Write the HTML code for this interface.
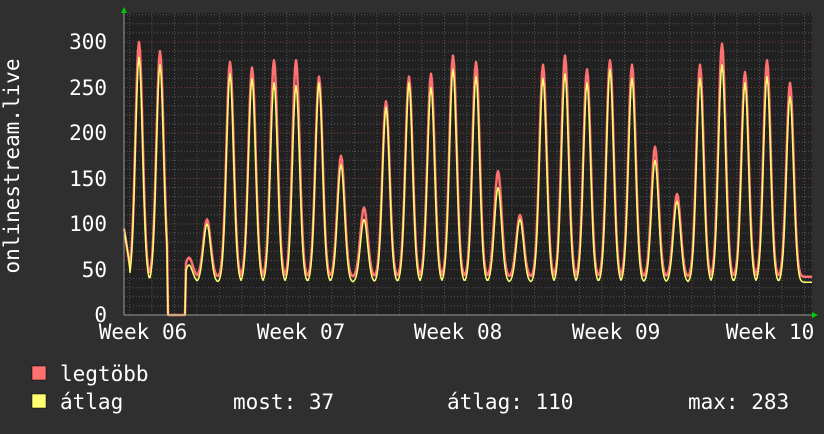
<!DOCTYPE html><html><head><meta charset="utf-8"><style>
body{margin:0;background:#2f2f2f;width:824px;height:430px;overflow:hidden;font-family:"DejaVu Sans Mono","Liberation Mono",monospace;color:#fff}
svg text{font-family:"DejaVu Sans Mono","Liberation Mono",monospace;fill:#fff;font-size:21px}
</style></head><body>
<svg id="g" width="824" height="430" xmlns="http://www.w3.org/2000/svg">
<rect x="124" y="13" width="688" height="302" fill="#212121"/>
<g id="grid"></g>
<polyline id="r" fill="none" stroke="#ff7070" stroke-width="2.5" stroke-linejoin="round"/>
<polyline id="y" fill="none" stroke="#ffff70" stroke-width="1.5" stroke-linejoin="round"/>
<line x1="124" y1="315" x2="814" y2="315" stroke="#999" stroke-width="1"/>
<line x1="124" y1="315" x2="124" y2="10" stroke="#999" stroke-width="1"/>
<polygon points="121,13 127,13 124,7" fill="#0c0"/>
<polygon points="812,312 812,318 818,315" fill="#0c0"/>
<g text-anchor="end">
<text x="107" y="49">300</text><text x="107" y="95">250</text><text x="107" y="140">200</text><text x="107" y="186">150</text><text x="107" y="231">100</text><text x="107" y="277">50</text><text x="107" y="322">0</text>
</g>
<g text-anchor="middle">
<text x="143" y="339">Week 06</text><text x="301" y="339">Week 07</text><text x="458" y="339">Week 08</text><text x="616" y="339">Week 09</text><text x="770" y="339">Week 10</text>
</g>
<text transform="translate(19,166) rotate(-90)" text-anchor="middle">onlinestream.live</text>
<rect x="32" y="366" width="14" height="14" fill="#ff7070" stroke="#000" stroke-width="0.5"/>
<rect x="32" y="394" width="14" height="14" fill="#ffff70" stroke="#000" stroke-width="0.5"/>
<text x="60" y="381">legtöbb</text>
<text x="60" y="409">átlag</text>
<text x="233" y="409">most: 37</text>
<text x="447" y="409">átlag: 110</text>
<text x="688" y="409">max: 283</text>
</svg>
<script>
var ns="http://www.w3.org/2000/svg",g=document.getElementById("grid");
function ln(x1,y1,x2,y2,c){var l=document.createElementNS(ns,"line");l.setAttribute("x1",x1);l.setAttribute("y1",y1);l.setAttribute("x2",x2);l.setAttribute("y2",y2);l.setAttribute("stroke",c);l.setAttribute("stroke-width",1);l.setAttribute("stroke-dasharray","1,2");g.appendChild(l);}
for(var v=10;v<=330;v+=10){var yy=315-v*0.91;if(yy<13)break;ln(124,yy,812,yy,v%50==0?"#7a3a3a":"#555");}
for(var x=129.5;x<812;x+=22.5){ln(x,13,x,315,"#555");}
for(var x=219.5;x<812;x+=157.5){ln(x,13,x,315,"#7a3a3a");}
var P=[[139,300,283],[160,290,275],[189,63,55],[207,105,100],[230,278,265],[252,272,260],[274,280,255],[296,280,252],[319,262,255],[341,175,165],[364,118,105],[386,235,228],[409,262,255],[431,265,250],[453,285,270],[476,278,262],[498,158,140],[520,110,105],[543,275,260],[565,285,265],[587,270,255],[610,280,270],[632,275,260],[655,185,170],[677,133,125],[700,275,260],[722,298,275],[745,267,255],[767,280,262],[790,255,240]];
function val(x,k){if(x>=168&&x<=185)return 0;var s=0;for(var i=0;i<P.length;i++){var d=(x-P[i][0])/3.6;var base=k==1?42:36;var h=P[i][k]-base;var e=Math.exp(-d*d/2);s=Math.max(s,base+h*e);}
if(x<130)s=Math.max(s,95-(x-124)*7);return s;}
function pts(k){var a=[];for(var x=124;x<=812;x+=1){var v=val(x,k);a.push(x+","+(315-v*0.91).toFixed(1));}return a.join(" ");}
document.getElementById("r").setAttribute("points",pts(1));
document.getElementById("y").setAttribute("points",pts(2));
</script>
</body></html>
